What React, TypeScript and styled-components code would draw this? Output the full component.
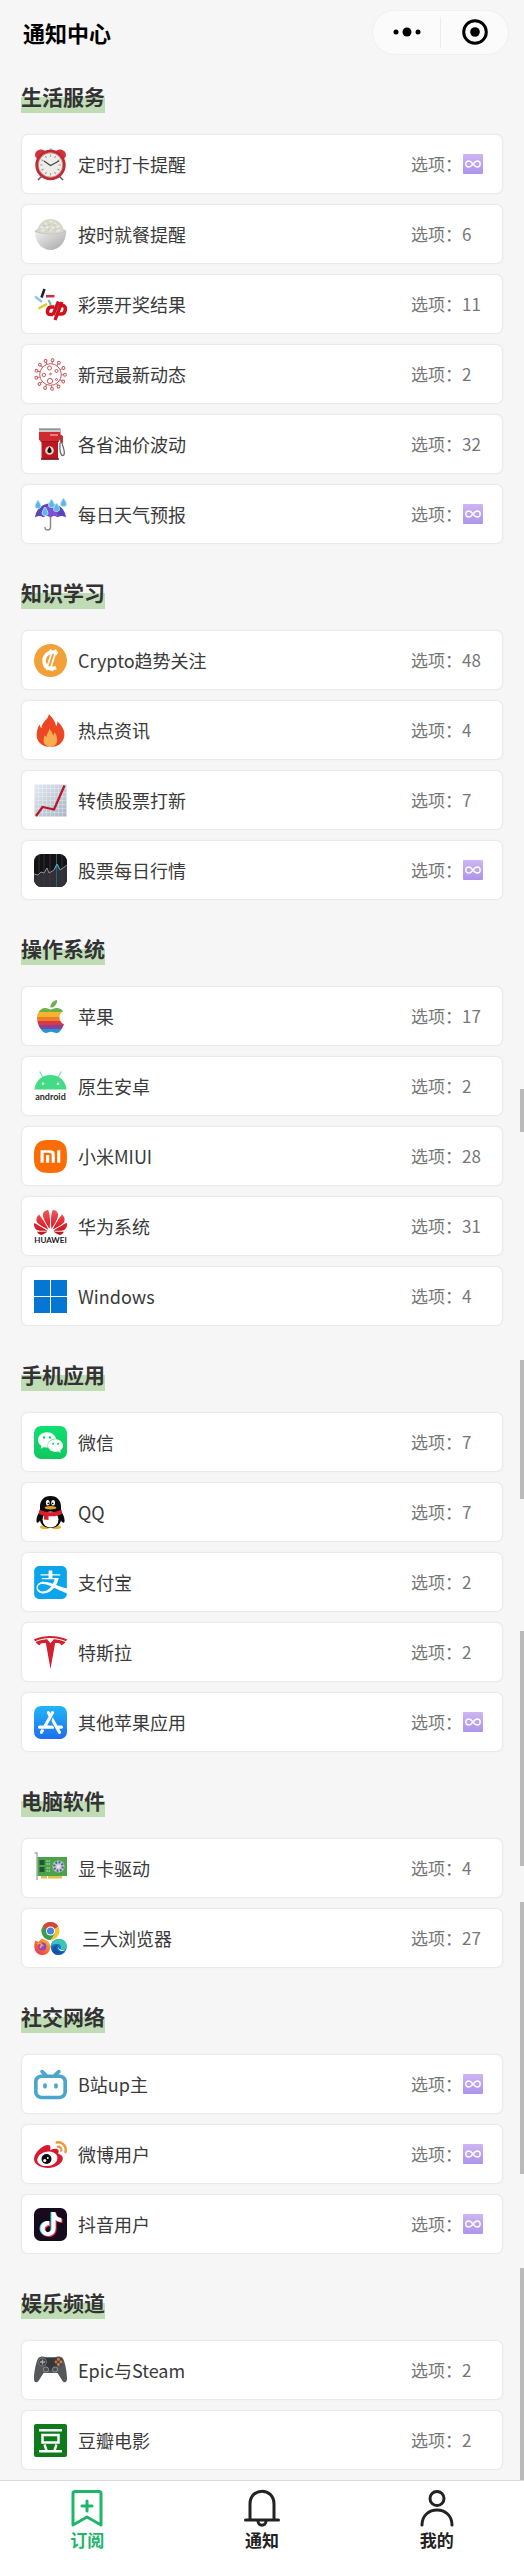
import React from "react";
import styled, { createGlobalStyle } from "styled-components";
import {
  SiAlipay,
  SiApple,
  SiAppstore,
  SiBilibili,
  SiHuawei,
  SiSinaweibo,
  SiTesla,
  SiTiktok,
  SiWechat,
  SiXiaomi,
} from "react-icons/si";

const GlobalStyle = createGlobalStyle`
  * { box-sizing: border-box; }
  body {
    margin: 0;
    background: #f6f6f6;
    color: #333;
    font-family: "Noto Sans CJK SC", "Noto Sans", sans-serif;
  }
  button { font: inherit; }
`;

/* ---------- layout ---------- */

const Page = styled.div`
  position: relative;
  display: flex;
  flex-direction: column;
  min-height: 100vh;
`;

const Header = styled.header`
  display: flex;
  align-items: center;
  justify-content: space-between;
  height: 64px;
  padding: 0 15px 0 23px;
`;

const PageTitle = styled.h1`
  margin: 0;
  color: #000;
  font-size: 22px;
  line-height: 32px;
  font-weight: 700;
`;

const Capsule = styled.div`
  display: flex;
  align-items: center;
  width: 137px;
  height: 45px;
  border: 1px solid #f0f0f0;
  border-radius: 23px;
  background: #fbfbfb;
`;

const CapsuleButton = styled.button`
  flex: 1;
  display: flex;
  align-items: center;
  justify-content: center;
  height: 31px;
  padding: 0;
  border: 0;
  background: none;
  & + & {
    border-left: 1px solid #ececec;
  }
`;

const Main = styled.main`
  flex: 1;
  display: flex;
  flex-direction: column;
  gap: 33px;
  padding: 17px 21px 10px;
`;

const Section = styled.section`
  display: flex;
  flex-direction: column;
  align-items: flex-start;
  gap: 21px;
`;

const SectionTitle = styled.h2`
  margin: 0;
  padding-bottom: 2px;
  background: linear-gradient(transparent 50%, #bfdcb5 50%);
  font-size: 21px;
  line-height: 30px;
  font-weight: 700;
`;

const CardList = styled.ul`
  display: flex;
  flex-direction: column;
  gap: 10px;
  width: 100%;
  margin: 0;
  padding: 0;
  list-style: none;
`;

const Card = styled.button`
  display: flex;
  align-items: center;
  gap: 11px;
  width: 100%;
  height: 60px;
  padding: 0 0 0 12px;
  border: 1px solid #ebebeb;
  border-radius: 7px;
  background: #fff;
  box-shadow: 0 0 2px rgba(0, 0, 0, 0.06);
  text-align: left;
`;

const IconFrame = styled.svg`
  display: block;
  flex: none;
  width: 33px;
  height: 33px;
`;

const CardName = styled.span`
  flex: 1;
  color: #3a3a3a;
  font-size: 18px;
  line-height: 26px;
  font-weight: 400;
  white-space: pre;
`;

const CardMeta = styled.span`
  display: flex;
  align-items: center;
  flex: none;
  width: 91px;
  color: #777;
  font-size: 17px;
  line-height: 26px;
`;

const Badge = styled.svg`
  display: block;
  width: 20px;
  height: 20px;
  margin-left: 1px;
`;

const TabBar = styled.nav`
  position: sticky;
  bottom: 0;
  display: flex;
  height: 81px;
  padding-top: 7px;
  border-top: 1px solid #dcdcdc;
  background: #fff;
`;

const Tab = styled.button<{ $active?: boolean }>`
  flex: 1;
  display: flex;
  flex-direction: column;
  align-items: center;
  padding: 0;
  border: 0;
  background: none;
  color: ${(p) => (p.$active ? "#1fb56a" : "#222")};
  font-size: 17px;
  line-height: 22px;
  font-weight: 700;
`;

const TabIcon = styled.svg`
  display: block;
  width: 40px;
  height: 41px;
  fill: none;
  stroke: currentColor;
  stroke-width: 3;
  stroke-linecap: round;
  stroke-linejoin: round;
`;

/* Scroll indicator pieces lying over the right edge of the list */
const ScrollMark = styled.div<{ $top: number; $length: number }>`
  position: absolute;
  right: 0;
  top: ${(p) => p.$top}px;
  width: 4px;
  height: ${(p) => p.$length}px;
  background: #bababa;
`;

const GradientDefs = styled.svg`
  display: block;
  width: 0;
  height: 0;
`;

/* ---------- icons, all on a 33 x 33 grid ---------- */

const spokes = (count: number) =>
  Array.from({ length: count }, (_, i) => (i * 360) / count);

const icons: Record<string, React.ReactNode> = {
  clock: (
    <>
      <path d="M8 28l-4 4M25 28l4 4" stroke="#555" strokeWidth="1.4" />
      <path d="M1.5 9C-.5 4 5 0 10 2.2l1.5 1.6L3.5 11zM31.5 9c2-5-3.5-9-8.5-6.8l-1.5 1.6L29.5 11z" fill="#d3323b" />
      <rect x="15" y=".5" width="3.5" height="4" rx="1" fill="#b9b4b4" />
      <circle cx="16.5" cy="17" r="13.8" fill="#ededea" stroke="#c02a33" strokeWidth="2.8" />
      <circle cx="16.5" cy="17" r="12.2" fill="none" stroke="#a9343a" strokeWidth=".5" />
      {spokes(12).map((a) => (
        <path key={a} d="M16.5 6.5V9" stroke="#999" strokeWidth=".9" transform={`rotate(${a} 16.5 17)`} />
      ))}
      <path d="M10 13l6.5 4.5L25 13" fill="none" stroke="#444" strokeWidth="1.1" />
    </>
  ),
  rice: (
    <>
      <ellipse cx="16.5" cy="13.5" rx="15.8" ry="4" fill="#c7c6bf" />
      <path d="M3 13C4.500 6 9 1 16.500 1S28.500 6 30 13c-6 3.500-21 3.500-27 0z" fill="#d8d7cb" />
      <path d="M7 9l2 1M11 5l1.500 1M16 3l2 1M21 5l1 1.500M25 8l-2 1M12 10l2-1M18 9l2 1M16 13l1.500-1M8 13l2-1M23 13l2-.5" stroke="#eeede4" strokeWidth="1.5" strokeLinecap="round" />
      <path d="M9 7l1.500.5M14 7l1.500-.5M20 7l1.500-.5M14 11.500l1.500.5M21 11l1.500.5" stroke="#bfbdae" strokeWidth=".8" />
      <path d="M.7 13.500C7 17.500 26 17.500 32.300 13.500 32 24 25 32 16.500 32S1 24 .7 13.500z" fill="url(#bowl)" />
    </>
  ),
  lottery: (
    <>
      <path d="M10.5 1L7.5 9.500" stroke="#222" strokeWidth="2.6" />
      <path d="M12 8.200h8.500" stroke="#cf2f46" strokeWidth="2.6" />
      <path d="M1 8.500l7 5.500" stroke="#8fc4e6" strokeWidth="2.3" />
      <path d="M4.500 20.500l8.500-4.500" stroke="#dfc82c" strokeWidth="2.5" />
      <path d="M14.500 12l2.500 5" stroke="#6fb59e" strokeWidth="2" />
      <path d="M24.500 13.500L19 27M28 14l-7 18" fill="none" stroke="#d0111b" strokeWidth="3.4" />
      <path d="M20.500 19h-3c-4.500 0-5.500 7.500-1.500 7.500h3M25 17.500h3.500c4.500 0 3.500 8.500-1.500 8.500h-3.500" fill="none" stroke="#d0111b" strokeWidth="3.6" />
    </>
  ),
  virus: (
    <g fill="none" stroke="#c75a60" strokeWidth="1">
      <circle cx="16.5" cy="16.5" r="10.8" />
      {spokes(13).map((a) => (
        <g key={a} transform={`rotate(${a + 8} 16.5 16.5)`}>
          <path d="M16.500 5.700V3.300" />
          <circle cx="16.5" cy="2" r="1.4" />
        </g>
      ))}
      <circle cx="15.5" cy="10" r="2" />
      <circle cx="22.5" cy="13" r="1.5" />
      <circle cx="9.8" cy="17" r="1.7" />
      <circle cx="16.5" cy="16" r=".9" />
      <circle cx="16" cy="23" r="2.6" />
      <circle cx="22.5" cy="21.5" r="1" />
    </g>
  ),
  fuel: (
    <>
      <path d="M27 7c2 3 .5 6 1.500 10 1.500 4 3 10 .5 10.500S25.500 22 26 15" fill="none" stroke="#6c6466" strokeWidth="1.2" />
      <path d="M25 6l4 2v6l-2.500 2z" fill="#b33a3c" />
      <path d="M7.500 13H24v18.500H7.500z" fill="#bb1822" />
      <path d="M5 2h21.500v8.500l-2 3.500H7l-2-2.500z" fill="#cf2a2f" />
      <path d="M5 1h21.500v3H5z" fill="#c8cbd0" />
      <path d="M5 1h21.500" stroke="#555" strokeWidth=".9" />
      <path d="M16 7h8" stroke="#ef9a9a" strokeWidth="1.5" />
      <path d="M7 13.600h17.500" stroke="#8b1016" strokeWidth=".8" />
      <path d="M7 31h18" stroke="#7c1a1f" strokeWidth="1.5" />
      <circle cx="15.5" cy="22.5" r="4.3" fill="#ebd6c8" />
      <path d="M15.500 18.800c3 3.700 2.600 6.200 0 6.200s-3-2.500 0-6.200z" fill="#111" />
    </>
  ),
  umbrella: (
    <>
      <path d="M16.500 17v12c0 4-5.500 4-5.500.5" fill="none" stroke="#8a8a8f" strokeWidth="1.5" strokeLinecap="round" />
      <path d="M1 19.500C2 11 8 5.500 16.500 5.500S31 11 32 19.500c-3-2-6-2-8-.3-2.500-2-5-2-7.500 0-2.500-2-5-2-7.500 0-2-1.700-5-1.700-8 .3z" fill="#5b45b8" />
      <path d="M9 19.200c0-6 3-11 7.500-13.700C21 8 24 13 24 19.200c-2.500-2-5-2-7.500 0-2.500-2-5-2-7.500 0z" fill="#7d50d6" />
      {[
        [4, 2],
        [17.5, 1],
        [29.5, 0],
        [11, 9],
        [22.5, 5],
      ].map(([x, y]) => (
        <path key={x} transform={`translate(${x} ${y})`} d="M0 0c4 5.500 3.800 8.500 0 8.500S-4 5.500 0 0z" fill="#5fb6e8" stroke="#b9e4f7" strokeWidth=".9" />
      ))}
    </>
  ),
  crypto: (
    <>
      <circle cx="16.5" cy="16.5" r="16.5" fill="#f3a038" />
      <path d="M23.500 9.500C14 5 9 13 10.300 19c1 5 6 7 11.700 4.500" fill="none" stroke="#fff" strokeWidth="3.6" />
      <path d="M17.500 9.500L12.500 25M21.500 9L16 26" stroke="#fff" strokeWidth="1.7" />
      <path d="M16 7.500l1-2M21 7.500l1-2M12.500 26l1-2M17.500 27l1-2" stroke="#fff" strokeWidth="1.8" />
    </>
  ),
  fire: (
    <>
      <path d="M15 0c4 4.500 7 8.500 7 12.500 1-1 1.500-3 1.300-5C29 12 31 18 30.300 22c-.8 6.500-6 11-13.800 11S3.500 28.500 2.700 22.500C2.300 18.500 3.500 14 5.500 10.500c.5 2 1 3 2 3.500C7.500 8 14 6 15 0z" fill="#ec4624" />
      <path d="M15.500 14.500c1.500 2.500 3 4 3.500 7 1-1 1.500-2.300 1.300-3.500 2.200 2.500 3.400 6.500 2.700 9.500C22.300 31 19.500 33 16.500 33s-6.300-2-6.800-5.500c-.5-2.500.3-5 1.300-6.500.4 1 .8 1.500 1.500 1.700.2-3.200 2.500-5 3-8.200z" fill="#fbac51" />
    </>
  ),
  chart: (
    <>
      <rect x=".5" y=".5" width="32" height="32" fill="url(#paper)" />
      {[4, 8, 12, 16, 20, 24, 28].map((v) => (
        <path key={v} d={`M${v + 0.5} .5v32M.5 ${v + 0.5}h32`} stroke="#fff" strokeOpacity=".4" strokeWidth=".7" />
      ))}
      <path d="M2 32l6.500-9L20 25.500 30.500 1.500" fill="none" stroke="#b51a2a" strokeWidth="2.3" />
    </>
  ),
  stocks: (
    <>
      <rect width="33" height="33" rx="7.5" fill="#131316" />
      <path d="M0 20l4 1 3-3 3 1 3-5 2 5 5-3 3-6 3 6 3-2 4-3v14c0 4-3 8-7 8H7c-4 0-7-4-7-8z" fill="#303036" />
      <path d="M5 1v31M10 0v33M16 0v33M28 1v31" stroke="#3a3a40" strokeWidth=".8" />
      <path d="M22.500 0v33" stroke="#23647c" strokeWidth="1" />
      <path d="M0 20l4 1 3-3 3 1 3-5 2 5 5-3 3-6 3 6 3-2 4-3" fill="none" stroke="#a7a7ad" strokeWidth=".8" />
      <path d="M20.500 15l2.500-5 2.500 5" fill="none" stroke="#39a5cb" strokeWidth="1" />
    </>
  ),
  apple: <SiApple size={33} fill="url(#rainbow)" />,
  android: (
    <>
      <path d="M6 2l3 5.500M27 2l-3 5.500" stroke="#7fdcaa" strokeWidth="1.2" strokeLinecap="round" />
      <path d="M.5 19.500C1 11 8 5 16.500 5s15.500 6 16 14.500z" fill="#44db85" />
      <circle cx="9" cy="13.8" r="1.3" fill="#fff" />
      <circle cx="24" cy="13.8" r="1.3" fill="#fff" />
      <text x="16.5" y="29.5" textAnchor="middle" fontFamily="Lato, sans-serif" fontSize="9" fontWeight="700" fill="#2b2b2b">
        android
      </text>
    </>
  ),
  xiaomi: (
    <>
      <rect x="4" y="6" width="25" height="20" fill="#fff" />
      <SiXiaomi size={33} fill="#fb6d04" />
    </>
  ),
  huawei: (
    <>
      <SiHuawei size={33} y={-4} fill="url(#petals)" />
      <text x="16.5" y="32.5" textAnchor="middle" fontFamily="Lato, sans-serif" fontSize="8" fontWeight="700" fill="#222">
        HUAWEI
      </text>
    </>
  ),
  windows: <path d="M0 0h16v16H0zM17 0h16v16H17zM0 17h16v16H0zM17 17h16v16H17z" fill="#0577d2" />,
  wechat: (
    <>
      <rect width="33" height="33" rx="7" fill="url(#wechatGreen)" />
      <SiWechat size={25} x={4} y={4} fill="#fff" />
    </>
  ),
  qq: (
    <>
      <ellipse cx="11" cy="31" rx="5" ry="2" fill="#e3b233" />
      <ellipse cx="22" cy="31" rx="5" ry="2" fill="#e3b233" />
      <path d="M16.500 0C9.500 0 6 5 6 10.500V15c-2 3-4 7-3.500 10.500.3 2 2 1.500 3.500-1C7 29 11 32 16.500 32S26 29 27 24.500c1.500 2.500 3.200 3 3.500 1 .5-3.500-1.500-7.500-3.500-10.500v-4.500C27 5 23.500 0 16.500 0z" fill="#0b0b0b" />
      <ellipse cx="16.5" cy="23.5" rx="8" ry="8" fill="#fff" />
      <ellipse cx="13.8" cy="6.8" rx="1.9" ry="2.8" fill="#fff" />
      <ellipse cx="19.2" cy="6.8" rx="1.9" ry="2.8" fill="#fff" />
      <circle cx="14.3" cy="7.3" r=".9" />
      <circle cx="18.7" cy="7.3" r=".9" />
      <ellipse cx="16.5" cy="11.8" rx="5.8" ry="1.7" fill="#e5a21d" />
      <path d="M5.500 13.500c6 3.500 16 3.500 22 0l.5 4.500c-4 2-8 2.500-13.500 2.200V24l-4.500-.5v-4C8 19 6 18.500 4.500 17.800z" fill="#d81e2c" />
    </>
  ),
  alipay: (
    <>
      <rect x="1" y="1" width="31" height="31" rx="4" fill="#fff" />
      <SiAlipay size={33} fill="#0ba5ec" />
    </>
  ),
  tesla: <SiTesla size={33} fill="#d2202f" />,
  appstore: (
    <>
      <rect width="33" height="33" rx="7" fill="url(#storeBlue)" />
      <SiAppstore size={25} x={4} y={4} fill="#fff" />
    </>
  ),
  gpu: (
    <>
      <path d="M.5 1H3v27" fill="none" stroke="#a5a9ab" strokeWidth="1.4" />
      <path d="M7 23h6v3.500H7zM14 23h14v3.500H14z" fill="#dcc04b" />
      <rect x="3.5" y="5" width="29.5" height="19" fill="#4aa24b" />
      <path d="M5.500 8h5v5h-5zM5.500 15h5v5h-5z" fill="#24533b" />
      <path d="M12.500 9h4M12.500 12h4M12.500 16h4M12.500 19h4" stroke="#a3d7a0" strokeWidth="1.6" strokeDasharray="1.3 .8" />
      <circle cx="24.5" cy="14.5" r="6" fill="#c3ccd8" />
      <circle cx="24.5" cy="14.5" r="4.3" fill="none" stroke="#59667f" strokeWidth="2.2" strokeDasharray="2 1.3" />
      <circle cx="24.5" cy="14.5" r="1.7" fill="#e3e7ee" />
    </>
  ),
  browsers: (
    <>
      <circle cx="16.5" cy="9" r="9" fill="#f4c52e" />
      <path d="M16.500 9L8.700 4.500A9 9 0 0 0 16.500 18l4-6z" fill="#3c9a52" />
      <path d="M16.500 9L8.700 4.500a9 9 0 0 1 15.600 0z" fill="#d2453c" />
      <circle cx="16.5" cy="9" r="4.5" fill="#fff" />
      <circle cx="16.5" cy="9" r="3.5" fill="#4284e0" />
      <path d="M1.500 18.500l3 1.500 3-3.300c3 0 9 2.800 9 8.300a8 8 0 0 1-16.200 0c0-2.500.4-4.500 1.200-6.500z" fill="url(#fox)" />
      <circle cx="8.3" cy="24.5" r="4" fill="#8b45d6" />
      <path d="M3 22c2-1.500 4.500-.5 5.500 1.500-2 0-2.500 1.500-1.500 2.500" fill="none" stroke="#f9a03c" strokeWidth="1.7" />
      <circle cx="24.7" cy="25" r="8" fill="#1674cf" />
      <path d="M16.700 24c1-5 5-7.200 9-7 4.500.3 7.300 3.500 7.200 7.500-.2 3-3.500 4-6.500 3 1.500-2 .5-5-2.400-5.500-3-.4-5.800.5-7.300 2z" fill="#3cc4b4" />
      <path d="M24 23c-3 1.500-1.500 7.500 6 6.500-2.500 4-9 4.500-11 1-1.800-3.500 1-7.500 5-7.500z" fill="#1654a5" />
      <path d="M25 23.500c-1.500 2 0 4.500 4 4.500l2.500-.3c-1 .8-3 1.600-5 1-2-.8-3-3.500-1.500-5.200z" fill="#fff" />
    </>
  ),
  bilibili: <SiBilibili size={33} fill="#4ba5cd" />,
  weibo: (
    <>
      <SiSinaweibo size={33} fill="url(#weiboRed)" />
      <ellipse cx="13.5" cy="20.5" rx="10" ry="6.8" fill="#fff" transform="rotate(-8 13.5 20.5)" />
      <circle cx="12.5" cy="21" r="5" fill="#0c0c0c" />
      <circle cx="10.8" cy="22.5" r="1.6" fill="#fff" />
      <circle cx="13.8" cy="20" r=".9" fill="#fff" />
    </>
  ),
  douyin: (
    <>
      <rect width="33" height="33" rx="6.5" fill="#160a1c" />
      <SiTiktok size={24} x={4} y={4} fill="#38e0e0" />
      <SiTiktok size={24} x={6} y={5} fill="#f5315c" />
      <SiTiktok size={24} x={5} y={4} fill="#fff" />
    </>
  ),
  gamepad: (
    <>
      <path d="M4 4.500C6 2 10 2 12 3.500h9C23 2 27 2 29 4.500c2.500 5 4 14.500 4 20 0 4-2.500 5-4.500 2.500L23.500 19h-14L4.500 27C2.500 29.500 0 28.500 0 24.500c0-5.500 1.500-15 4-20z" fill="#55585a" />
      <path d="M11 3.500h11l1 13H10z" fill="#35383a" />
      <circle cx="8.5" cy="8" r="4" fill="#3a3d40" stroke="#818486" strokeWidth=".8" />
      <path d="M8.500 5.500v5M6 8h5" stroke="#a6a6a6" strokeWidth="1.4" />
      <circle cx="24.5" cy="8" r="4.2" fill="#47403c" />
      <circle cx="24.5" cy="5.5" r="1.4" fill="#df7d45" />
      <circle cx="24.5" cy="10.5" r="1.4" fill="#df7d45" />
      <circle cx="22" cy="8" r="1.4" fill="#d06a3c" />
      <circle cx="27" cy="8" r="1.4" fill="#df7d45" />
      <circle cx="12" cy="15.5" r="2.6" fill="#4d5052" stroke="#9a9c9e" strokeWidth=".9" />
      <circle cx="21" cy="15.5" r="2.6" fill="#4d5052" stroke="#9a9c9e" strokeWidth=".9" />
    </>
  ),
  douban: (
    <>
      <rect width="33" height="33" rx="2" fill="#0f7a1b" />
      <path d="M5 6.200h23M5 27.200h23" stroke="#fff" strokeWidth="2.4" />
      <rect x="8.5" y="11" width="16" height="7.5" fill="none" stroke="#fff" strokeWidth="2.5" />
      <path d="M10.500 20.500l2 6M22.500 20.500l-2 6" stroke="#fff" strokeWidth="2.4" />
    </>
  ),
};

const Gradients = () => (
  <GradientDefs aria-hidden="true">
    <defs>
      <linearGradient id="bowl" x1="0" y1="0" x2="1" y2="1">
        <stop offset="0" stopColor="#f1f1f0" />
        <stop offset="1" stopColor="#a5a5a5" />
      </linearGradient>
      <linearGradient id="paper" x1="0" y1="0" x2="1" y2="1">
        <stop offset="0" stopColor="#e2e9f0" />
        <stop offset="1" stopColor="#a9b5c4" />
      </linearGradient>
      <linearGradient id="rainbow" x1="0" y1="0" x2="0" y2="1">
        <stop offset=".36" stopColor="#6bb04a" />
        <stop offset=".36" stopColor="#f6b82d" />
        <stop offset=".5" stopColor="#f6b02d" />
        <stop offset=".5" stopColor="#ee7d2b" />
        <stop offset=".63" stopColor="#ee7d2b" />
        <stop offset=".63" stopColor="#d83a45" />
        <stop offset=".76" stopColor="#d83a45" />
        <stop offset=".76" stopColor="#8a4098" />
        <stop offset=".87" stopColor="#8a4098" />
        <stop offset=".87" stopColor="#2196d8" />
      </linearGradient>
      <linearGradient id="petals" x1="0" y1="0" x2="0" y2="1">
        <stop offset="0" stopColor="#ee5a5c" />
        <stop offset=".6" stopColor="#e0242f" />
        <stop offset="1" stopColor="#b5141f" />
      </linearGradient>
      <linearGradient id="wechatGreen" x1="0" y1="0" x2="0" y2="1">
        <stop offset="0" stopColor="#0fe070" />
        <stop offset="1" stopColor="#10c65f" />
      </linearGradient>
      <linearGradient id="storeBlue" x1="0" y1="0" x2="0" y2="1">
        <stop offset="0" stopColor="#22b5f8" />
        <stop offset="1" stopColor="#1d6fee" />
      </linearGradient>
      <linearGradient id="fox" x1="1" y1="0" x2="0" y2="1">
        <stop offset="0" stopColor="#fccb3c" />
        <stop offset=".5" stopColor="#f76b2f" />
        <stop offset="1" stopColor="#e62b63" />
      </linearGradient>
      <linearGradient id="weiboRed" x1="0" y1="1" x2="1" y2="0">
        <stop offset=".7" stopColor="#d7192f" />
        <stop offset=".71" stopColor="#ec9a3c" />
      </linearGradient>
      <linearGradient id="tile" x1="0" y1="0" x2="0" y2="1">
        <stop offset="0" stopColor="#cdb6f4" />
        <stop offset="1" stopColor="#ae94ea" />
      </linearGradient>
    </defs>
  </GradientDefs>
);

/* ---------- data ---------- */

type Item = { icon: string; name: string; count?: number };

const sections: { title: string; items: Item[] }[] = [
  {
    title: "生活服务",
    items: [
      { icon: "clock", name: "定时打卡提醒" },
      { icon: "rice", name: "按时就餐提醒", count: 6 },
      { icon: "lottery", name: "彩票开奖结果", count: 11 },
      { icon: "virus", name: "新冠最新动态", count: 2 },
      { icon: "fuel", name: "各省油价波动", count: 32 },
      { icon: "umbrella", name: "每日天气预报" },
    ],
  },
  {
    title: "知识学习",
    items: [
      { icon: "crypto", name: "Crypto趋势关注", count: 48 },
      { icon: "fire", name: "热点资讯", count: 4 },
      { icon: "chart", name: "转债股票打新", count: 7 },
      { icon: "stocks", name: "股票每日行情" },
    ],
  },
  {
    title: "操作系统",
    items: [
      { icon: "apple", name: "苹果", count: 17 },
      { icon: "android", name: "原生安卓", count: 2 },
      { icon: "xiaomi", name: "小米MIUI", count: 28 },
      { icon: "huawei", name: "华为系统", count: 31 },
      { icon: "windows", name: "Windows", count: 4 },
    ],
  },
  {
    title: "手机应用",
    items: [
      { icon: "wechat", name: "微信", count: 7 },
      { icon: "qq", name: "QQ", count: 7 },
      { icon: "alipay", name: "支付宝", count: 2 },
      { icon: "tesla", name: "特斯拉", count: 2 },
      { icon: "appstore", name: "其他苹果应用" },
    ],
  },
  {
    title: "电脑软件",
    items: [
      { icon: "gpu", name: "显卡驱动", count: 4 },
      { icon: "browsers", name: " 三大浏览器", count: 27 },
    ],
  },
  {
    title: "社交网络",
    items: [
      { icon: "bilibili", name: "B站up主" },
      { icon: "weibo", name: "微博用户" },
      { icon: "douyin", name: "抖音用户" },
    ],
  },
  {
    title: "娱乐频道",
    items: [
      { icon: "gamepad", name: "Epic与Steam", count: 2 },
      { icon: "douban", name: "豆瓣电影", count: 2 },
    ],
  },
];

const scrollMarks = [
  { top: 1089, length: 43 },
  { top: 1360, length: 139 },
  { top: 1631, length: 235 },
  { top: 1902, length: 272 },
  { top: 2268, length: 212 },
];

const InfinityBadge = () => (
  <Badge viewBox="0 0 20 20" role="img" aria-label="不限">
    <rect width="20" height="20" rx="1" fill="url(#tile)" />
    <path
      d="M10 10C8.500 8 7.500 7 5.800 7a3 3 0 0 0 0 6C7.500 13 8.500 12 10 10s2.500-3 4.200-3a3 3 0 0 1 0 6C12.500 13 11.500 12 10 10z"
      fill="none"
      stroke="#fff"
      strokeWidth="1.3"
    />
  </Badge>
);

export default function App() {
  return (
    <Page>
      <GlobalStyle />
      <Gradients />
      <Header>
        <PageTitle>通知中心</PageTitle>
        <Capsule>
          <CapsuleButton aria-label="更多">
            <svg width="28" height="10" viewBox="0 0 28 10">
              <circle cx="3" cy="5" r="2.5" />
              <circle cx="14" cy="5" r="4.5" />
              <circle cx="25" cy="5" r="2.5" />
            </svg>
          </CapsuleButton>
          <CapsuleButton aria-label="关闭">
            <svg width="26" height="26" viewBox="0 0 26 26">
              <circle cx="13" cy="13" r="11.3" fill="none" stroke="#000" strokeWidth="3" />
              <circle cx="13" cy="13" r="4.8" />
            </svg>
          </CapsuleButton>
        </Capsule>
      </Header>
      <Main>
        {sections.map((section) => (
          <Section key={section.title}>
            <SectionTitle>{section.title}</SectionTitle>
            <CardList>
              {section.items.map((item) => (
                <li key={item.name}>
                  <Card>
                    <IconFrame viewBox="0 0 33 33" aria-hidden="true">
                      {icons[item.icon]}
                    </IconFrame>
                    <CardName>{item.name}</CardName>
                    <CardMeta>选项：{item.count ?? <InfinityBadge />}</CardMeta>
                  </Card>
                </li>
              ))}
            </CardList>
          </Section>
        ))}
      </Main>
      {scrollMarks.map((mark) => (
        <ScrollMark key={mark.top} $top={mark.top} $length={mark.length} />
      ))}
      <TabBar>
        <Tab $active>
          <TabIcon viewBox="0 0 40 41">
            <path d="M8 3.500h24q2 0 2 2V37l-14-8-14 8V5.500q0-2 2-2z" />
            <path d="M20 13v10M15 18h10" />
          </TabIcon>
          订阅
        </Tab>
        <Tab>
          <TabIcon viewBox="0 0 40 41">
            <path d="M8 32V16C8 -1 32 -1 32 16v16M3.500 32h33" />
            <path d="M16 33c0 5.500 8 5.500 8 0" />
          </TabIcon>
          通知
        </Tab>
        <Tab>
          <TabIcon viewBox="0 0 40 41">
            <circle cx="20" cy="10.5" r="7" />
            <path d="M5 37c0-20 30-20 30 0" />
          </TabIcon>
          我的
        </Tab>
      </TabBar>
    </Page>
  );
}
